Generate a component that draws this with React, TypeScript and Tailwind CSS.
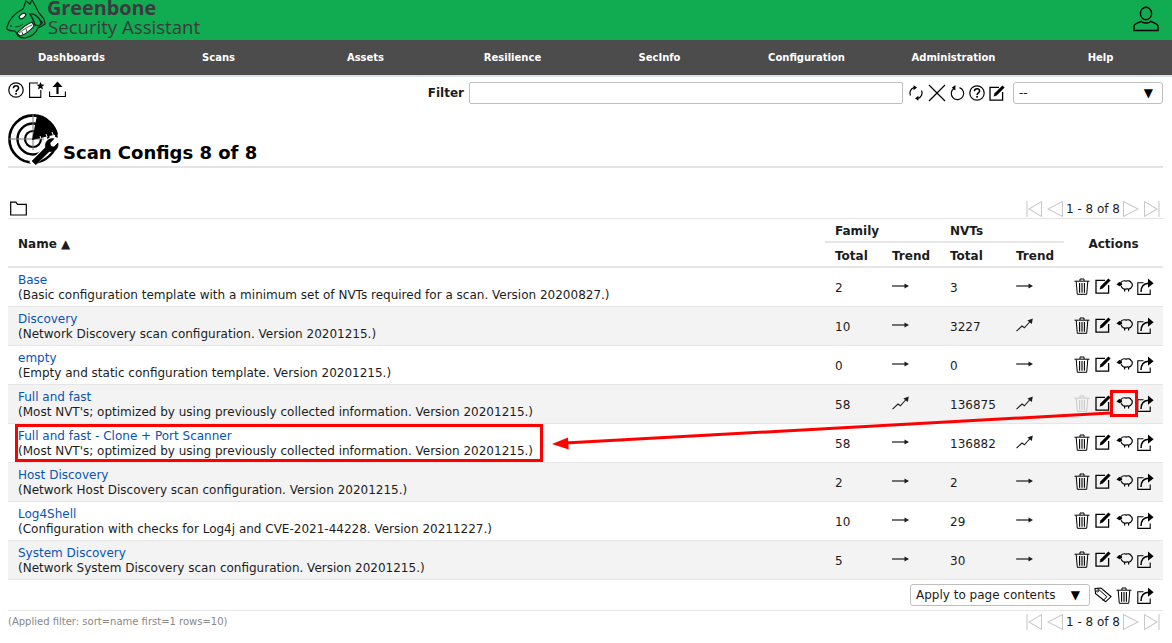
import React from "react";

const I = ({ w = 18, h = 18, vb = "0 0 18 18", className = "", children }: any) => (
  <svg width={w} height={h} viewBox={vb} className={"shrink-0 " + className} fill="none" stroke="currentColor" strokeWidth={1.3}>
    {children}
  </svg>
);

const Help = () => (
  <I w={16} h={16} vb="0 0 16 16">
    <circle cx="8" cy="8" r="7.2" strokeWidth="1.2" />
    <path d="M5.4 6.2C5.5 4.5 6.7 3.8 8 3.8c1.5 0 2.6.9 2.6 2.2 0 1.9-2.5 1.9-2.5 4" strokeWidth="1.5" />
    <rect x="7.2" y="10.9" width="1.7" height="1.7" fill="currentColor" stroke="none" />
  </I>
);
const NewStar = () => (
  <I w={16} h={16} vb="0 0 16 16">
    <path d="M9 1H.6v14.4h11.2V8" strokeWidth="1.1" />
    <path d="M11.5 0l1.1 2.6 2.8.2-2.1 1.8.7 2.8-2.5-1.5L9 7.4l.7-2.8-2.1-1.8 2.8-.2z" fill="currentColor" stroke="none" />
  </I>
);
const Upload = () => (
  <I w={17} h={17} vb="0 0 17 17">
    <path d="M.6 10.5v5h15.8v-5" strokeWidth="1.1" />
    <path d="M8.5 13V3" strokeWidth="2.2" />
    <path d="M8.5.5L13.5 6h-10z" fill="currentColor" stroke="none" />
  </I>
);
const Refresh = () => (
  <I w={16} h={16} vb="0 0 16 16">
    <path d="M2.4 10.5A5.8 5.8 0 0 1 6 2.6" strokeWidth="1.2" />
    <path d="M13.6 5.5A5.8 5.8 0 0 1 10 13.4" strokeWidth="1.2" />
    <path d="M5.6 .2l3.4 2.4-3.4 2.6zM10.4 15.8L7 13.4l3.4-2.6z" fill="currentColor" stroke="none" />
  </I>
);
const Cross = () => (
  <I w={18} h={18}>
    <path d="M1 1l16 16M17 1L1 17" strokeWidth="1.2" />
  </I>
);
const Reset = () => (
  <I w={15} h={16} vb="0 0 15 16">
    <path d="M9.5 2.6A6.2 6.2 0 1 1 4.2 3.2" strokeWidth="1.2" />
    <path d="M5.4 0v5.6L1.8 2.8z" fill="currentColor" stroke="none" />
  </I>
);
const Edit = ({ s = 16 }: any) => (
  <I w={s} h={s} vb="0 0 16 16">
    <path d="M10 2.4H1v12.8h12.6V7" strokeWidth="1.3" />
    <path d="M13.4.4l2.2 2.1-7.9 8-3.1 1 1-3.2z" fill="currentColor" stroke="none" />
  </I>
);
const Trash = ({ className = "" }: any) => (
  <I w={16} h={17} vb="0 0 16 17" className={className}>
    <path d="M.5 3.2h15M6 3V1h4v2" strokeWidth="1" />
    <path d="M2.2 3.4l1.1 12.9h9.4l1.1-12.9" strokeWidth="1" />
    <path d="M5.6 5v9.8M8 5v9.8M10.4 5v9.8" strokeWidth="1.1" />
  </I>
);
const Sheep = () => (
  <I w={17} h={16} vb="0 0 17 16">
    <path d="M5 4.4C6.4 2.8 8.6 2.5 10.2 3.1c1.8-.8 4.2-.2 4.8 1.4 1.7.9 1.7 3.8.4 4.7-.7 1.6-2.9 2.2-4.2 1.5-1.4.8-3.9.7-4.9-.8-.6-.6-1-1.2-1.1-1.8" strokeWidth="1.2" />
    <path d="M.4 6.5l2.8-2.4 2.4.4.6 2.6-2.6 1.2z" fill="currentColor" stroke="none" />
    <path d="M8.6 11v2.6M12.6 11v2.6" strokeWidth="1.2" />
  </I>
);
const Exp = () => (
  <I w={17} h={17} vb="0 0 17 17">
    <path d="M6.5 4.8H.8v11.6h12.4v-5" strokeWidth="1.1" />
    <path d="M4 14c0-5 2.5-8.4 7.4-8.8" strokeWidth="1.5" />
    <path d="M11 .6l5.6 4.6-5.6 4.6z" fill="currentColor" stroke="none" />
  </I>
);
const Tag = () => (
  <I w={18} h={16} vb="0 0 18 16">
    <path d="M1 1.5l6-.5 10 8.6-5.4 5.2L1.6 6.6z" strokeWidth="1.1" />
    <path d="M3.4 1.2l9.4 8.6-4 4" strokeWidth="1" />
    <circle cx="3.6" cy="4" r="1" strokeWidth="0.9" />
  </I>
);
const Folder = () => (
  <I w={17} h={15} vb="0 0 17 15" className="block">
    <path d="M.7 14V1.2h5.2l1.6 2.2h8.8V14z" strokeWidth="1.2" />
  </I>
);
const PL = ({ d, bar, className = "" }: any) => (
  <I w={16} h={16} vb="0 0 16 16" className={"text-[#c9c9c9] " + className}>
    <path d={d} strokeWidth="1.1" />
    {bar !== undefined && <path d={`M${bar} 0v16`} strokeWidth="1.1" />}
  </I>
);
const Pager = () => (
  <div className="flex items-center pr-[3px] text-[12px] leading-4 text-[#1c1c1c]">
    <PL d="M15.5 .6L3 8l12.5 7.4z" bar="1" />
    <PL d="M15.5 .6L1 8l14.5 7.4z" className="ml-[5px]" />
    <span className="ml-[3px] whitespace-nowrap">1 - 8 of 8</span>
    <PL d="M.5 .6L15 8 .5 15.4z" className="ml-[3px]" />
    <PL d="M.5 .6L13 8 .5 15.4z" bar="15" className="ml-[5px]" />
  </div>
);
const Flat = () => (
  <I w={17} h={10} vb="0 0 17 10">
    <path d="M0 5h14" strokeWidth="1.2" />
    <path d="M12.5 2.4L17 5l-4.5 2.6z" fill="currentColor" stroke="none" />
  </I>
);
const Up = () => (
  <I w={17} h={14} vb="0 0 17 14">
    <path d="M.5 13.2L6 8l2.4 1.8L14.5 3" strokeWidth="1.1" />
    <path d="M11.4 2.6L16.8.6l-1 5.4z" fill="currentColor" stroke="none" />
  </I>
);
const Sel = ({ w, label }: any) => (
  <div className={`flex h-[22px] items-center justify-between rounded-[3px] border border-[#bfbfbf] bg-white pl-[5px] pr-[9px] text-[12px] text-[#1c1c1c] ${w}`}>
    <span>{label}</span>
    <span className="text-[12px] leading-none text-black">▼</span>
  </div>
);

const Logo = () => (
  <svg width="43" height="40" viewBox="0 0 43 40" className="shrink-0" fill="none" stroke="#0b2a18" strokeWidth="1.2">
    <path d="M4 27C6 20 12 13 20 9L23 1l4 3 2-4c3 5 5 9 7 13l5 6 1 5-3 2-4 2c-2 5-7 9-13 10-4 0-7-1-8-4l-2-3c-3 0-6 0-8-2z" />
    <ellipse cx="19.5" cy="16" rx="3.6" ry="2" transform="rotate(-35 19.5 16)" fill="#fff" />
    <path d="M14 33c4-4 10-9 15-11l2 4c-3 4-9 9-14 10z" fill="#fff" />
    <path d="M16 33c4-3 8-6 13-8M20 35l-1-3M24 32l-1-3" strokeWidth="0.8" />
    <path d="M27 14c4-1 9 3 12 9l-3 3-4-1c-1-4-3-8-5-11z" strokeWidth="1.4" />
    <path d="M36 19l4 3-2 3z" fill="#0b2a18" stroke="none" />
    <circle cx="8" cy="26" r="0.9" fill="#0b2a18" stroke="none" />
    <path d="M12 27c3 0 6-1 8-3" strokeWidth="0.9" />
  </svg>
);

const Radar = () => (
  <svg width="51" height="51" viewBox="0 0 51 51" className="shrink-0" fill="none" stroke="#000">
    <circle cx="25" cy="25" r="23.6" strokeWidth="2.6" />
    <circle cx="25" cy="25" r="15.5" strokeWidth="2.4" />
    <circle cx="25" cy="25" r="8" strokeWidth="2.2" />
    <path d="M25 0v36M0 25h36" strokeWidth="1" stroke="#777" />
    <path d="M24 26L29 1.5C40 3 48 11 50 20z" fill="#000" stroke="none" />
    <path d="M32 22l1.2 3M38 20l1.2 3M44 18l1.2 3" stroke="#fff" strokeWidth="1" />
    <path d="M27 51l-3-3 14-14c-1-5 3-10 9-9l3 1-5 5 1 3 3 1 5-5" fill="#fff" stroke="#fff" strokeWidth="4" />
    <path d="M27.5 50.5l-3.5-3.5 13.5-13.5c-1.2-5 3-10 8.5-8.7l-4 4.2.8 3.2 3.2.8 4-4c1 5.5-3.7 9.8-8.8 8.4L28 50.5z" fill="#000" stroke="#000" strokeWidth="0.6" />
  </svg>
);

const Person = () => (
  <svg width="26" height="26" viewBox="0 0 26 26" fill="none" stroke="#000" strokeWidth="1.4">
    <ellipse cx="13" cy="7.5" rx="5.6" ry="6.2" />
    <path d="M1 24.5v-4.2c0-2.6 5-3.4 7.3-5 1.5 2.2 7.9 2.2 9.4 0 2.3 1.6 7.3 2.4 7.3 5v4.2z" />
  </svg>
);

const navs = ["Dashboards", "Scans", "Assets", "Resilience", "SecInfo", "Configuration", "Administration", "Help"];

const rows = [
  ["Base", "(Basic configuration template with a minimum set of NVTs required for a scan. Version 20200827.)", "2", 0, "3", 0],
  ["Discovery", "(Network Discovery scan configuration. Version 20201215.)", "10", 0, "3227", 1],
  ["empty", "(Empty and static configuration template. Version 20201215.)", "0", 0, "0", 0],
  ["Full and fast", "(Most NVT's; optimized by using previously collected information. Version 20201215.)", "58", 1, "136875", 1],
  ["Full and fast - Clone + Port Scanner", "(Most NVT's; optimized by using previously collected information. Version 20201215.)", "58", 0, "136882", 1],
  ["Host Discovery", "(Network Host Discovery scan configuration. Version 20201215.)", "2", 0, "2", 0],
  ["Log4Shell", "(Configuration with checks for Log4j and CVE-2021-44228. Version 20211227.)", "10", 0, "29", 0],
  ["System Discovery", "(Network System Discovery scan configuration. Version 20201215.)", "5", 0, "30", 0],
] as const;

export default function App() {
  return (
    <div className="relative h-[643px] w-[1172px] overflow-hidden bg-white text-[12px] text-[#1c1c1c]" style={{ fontFamily: '"DejaVu Sans", sans-serif' }}>
      <header className="flex h-10 items-start justify-between overflow-hidden bg-[#11ab51]">
        <div className="flex">
          <div className="ml-[3px] mr-px"><Logo /></div>
          <div className="text-[#3b3a3f]" style={{ fontFamily: '"Open Sans", sans-serif' }}>
            <div className="-mt-px text-[19.8px] font-bold leading-[18px]">Greenbone</div>
            <div className="ml-px mt-px text-[18.6px] leading-[18px]">Security Assistant</div>
          </div>
        </div>
        <div className="mr-[13px] mt-[6px]"><Person /></div>
      </header>
      <nav className="-ml-[2px] grid h-[35px] w-[1176px] grid-cols-8 items-center bg-[#4c4c4c] text-[10px] font-bold text-white">
        {navs.map((n) => <div key={n} className="text-center">{n}</div>)}
      </nav>
      <div className="h-0.5 bg-[#d5e3f7]" />

      <main className="pl-2 pr-[9px]">
        <div className="flex h-[27px] items-start pt-[5px]">
          <div className="flex w-[59px] items-start gap-[5px] text-black">
            <Help />
            <NewStar />
            <span className="-mt-[1px] -ml-px"><Upload /></span>
          </div>
          <div className="ml-[361px] flex flex-1 items-center">
            <span className="mr-[5px] font-bold">Filter</span>
            <div className="h-[22px] w-[434px] rounded-[2px] border border-[#bfbfbf] bg-white" />
            <div className="ml-[5px] flex w-[105px] items-center gap-[4px] text-black">
              <Refresh /><Cross /><Reset /><Help /><Edit />
            </div>
            <Sel w="w-[150px]" label="--" />
          </div>
        </div>

        <div className="mt-[5px] flex h-[59px] items-start border-b-2 border-[#e3e3e3]">
          <div className="mt-[5px]"><Radar /></div>
          <h1 className="ml-[4px] mt-[32px] text-[18px] font-bold leading-[24px] text-black">Scan Configs 8 of 8</h1>
        </div>

        <div className="mt-[31px] flex h-[18px] items-center justify-between text-black">
          <div className="pl-[2px]"><Folder /></div>
          <div className="pt-[1px]"><Pager /></div>
        </div>

        <div className="mt-[1px] border-t border-[#e3e3e3]">
          <div className="grid h-[49px] grid-cols-[817px_57px_58px_66px_58px_99px] border-b-2 border-[#e6e6e6] font-bold">
            <div className="row-span-2 flex items-center pl-[10px] pt-[2px]">Name ▲</div>
            <div className="col-span-2 flex h-[24px] items-center border-b-2 border-[#e6e6e6] pt-px pl-[10px]">Family</div>
            <div className="col-span-2 flex h-[24px] items-center border-b-2 border-[#e6e6e6] pt-px pl-[10px]">NVTs</div>
            <div className="row-span-2 flex items-center justify-center pt-[3px]">Actions</div>
            <div className="flex items-center pl-[10px] pt-[2px]">Total</div>
            <div className="flex items-center pl-[10px] pt-[2px]">Trend</div>
            <div className="flex items-center pl-[10px] pt-[2px]">Total</div>
            <div className="flex items-center pl-[10px] pt-[2px]">Trend</div>
          </div>
          {rows.map((r, i) => (
            <div key={r[0]} className={`grid h-[39px] grid-cols-[817px_57px_58px_66px_58px_99px] items-center border-b border-[#e6e6e6] ${i % 2 ? "bg-[#f3f3f3]" : "bg-white"}`}>
              <div className="whitespace-nowrap pl-[10px] pt-[2px] leading-[15px]">
                <div className="text-[#0a53b7]">{r[0]}</div>
                <div>{r[1]}</div>
              </div>
              <div className="pl-[10px] pt-[2px]">{r[2]}</div>
              <div className="flex pb-[2px] pl-[10px]">{r[3] ? <Up /> : <Flat />}</div>
              <div className="pl-[10px] pt-[2px]">{r[4]}</div>
              <div className="flex pb-[2px] pl-[10px]">{r[5] ? <Up /> : <Flat />}</div>
              <div className="flex items-center gap-[5px] pb-[2px] pl-[10px] text-black">
                <Trash className={r[0] === "Full and fast" ? "text-[#c9c9c9]" : ""} />
                <Edit /><Sheep /><span className="-ml-px flex"><Exp /></span>
              </div>
            </div>
          ))}
        </div>

        <div className="flex h-[31px] items-center justify-end border-b border-[#e6e6e6] pr-[9px] text-black">
          <Sel w="w-[180px]" label="Apply to page contents" />
          <div className="ml-[4px] flex items-center gap-[4px]">
            <Tag /><Trash /><span className="ml-px flex"><Exp /></span>
          </div>
        </div>

        <div className="flex h-[21px] items-center justify-between">
          <span className="text-[10px] text-[#888]">(Applied filter: sort=name first=1 rows=10)</span>
          <Pager />
        </div>
      </main>

      {/* annotation */}
      <div className="absolute left-[15px] top-[424px] h-[38px] w-[528px] border-[3px] border-[#f00]" />
      <div className="absolute left-[1110px] top-[390px] h-[27px] w-[28px] border-[3px] border-[#f00]" />
      <svg className="pointer-events-none absolute left-0 top-0" width="1172" height="643" fill="none">
        <path d="M1110 413L565 443" stroke="#f00" strokeWidth="3" />
        <path d="M552 444l16-6.5.7 12z" fill="#f00" />
      </svg>
    </div>
  );
}
